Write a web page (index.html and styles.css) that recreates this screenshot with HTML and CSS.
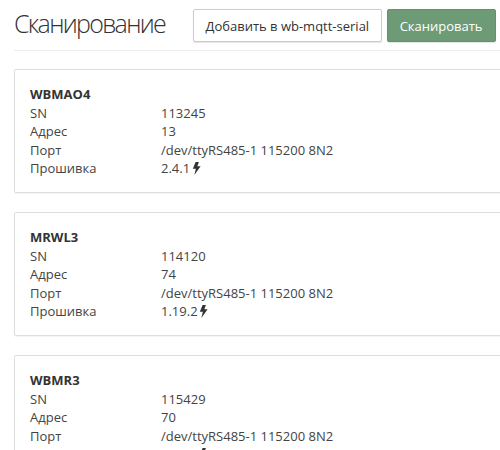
FILE: index.html
```html
<!DOCTYPE html>
<html lang="en">
  <head>
    <meta charset="UTF-8" />
    <title>Сканирование</title>
    <link rel="stylesheet" href="styles.css">
  </head>
  <body>
    <div class="page-header">
      <h1>Сканирование</h1>
      <button class="btn">Добавить в wb-mqtt-serial</button>
      <button class="btn btn-success">Сканировать</button>
    </div>

    <div class="device">
      <div class="device-name">WBMAO4</div>
      <div class="row"><span class="key">SN</span><span>113245</span></div>
      <div class="row"><span class="key">Адрес</span><span>13</span></div>
      <div class="row"><span class="key">Порт</span><span>/dev/ttyRS485-1 115200 8N2</span></div>
      <div class="row">
        <span class="key">Прошивка</span>
        <span>2.4.1 <svg class="bolt" viewBox="0 0 8 12"><path d="M3.2 0h3L4.8 4h3L2 12 3.4 6.2H.6z"/></svg></span>
      </div>
    </div>

    <div class="device">
      <div class="device-name">MRWL3</div>
      <div class="row"><span class="key">SN</span><span>114120</span></div>
      <div class="row"><span class="key">Адрес</span><span>74</span></div>
      <div class="row"><span class="key">Порт</span><span>/dev/ttyRS485-1 115200 8N2</span></div>
      <div class="row">
        <span class="key">Прошивка</span>
        <span>1.19.2 <svg class="bolt" viewBox="0 0 8 12"><path d="M3.2 0h3L4.8 4h3L2 12 3.4 6.2H.6z"/></svg></span>
      </div>
    </div>

    <div class="device">
      <div class="device-name">WBMR3</div>
      <div class="row"><span class="key">SN</span><span>115429</span></div>
      <div class="row"><span class="key">Адрес</span><span>70</span></div>
      <div class="row"><span class="key">Порт</span><span>/dev/ttyRS485-1 115200 8N2</span></div>
      <div class="row">
        <span class="key">Прошивка</span>
        <span>1.17.2 <svg class="bolt" viewBox="0 0 8 12"><path d="M3.2 0h3L4.8 4h3L2 12 3.4 6.2H.6z"/></svg></span>
      </div>
    </div>
  </body>
</html>
```

FILE: styles.css
```css
html,
body {
  height: 450px;
  overflow: hidden;
}
body {
  margin: 0;
  padding: 0 0 0 14px;
  background: white;
  font-family: "Open Sans", sans-serif;
  font-size: 13px;
  line-height: 18.57px;
  color: #444;
}
.page-header {
  display: flex;
  align-items: flex-start;
  width: 520px;
  height: 51px;
  padding-top: 9px;
  box-sizing: border-box;
  border-bottom: 1px solid #eee;
}
h1 {
  width: 179px;
  margin: -1px 0 0;
  font-size: 25px;
  font-weight: 300;
  letter-spacing: -1.7px;
  line-height: 30px;
  color: #333;
}
.btn {
  height: 33px;
  padding: 0 11.5px;
  margin-right: 5px;
  font-family: inherit;
  font-size: 13px;
  color: #333;
  background: white;
  border: 1px solid #ccc;
  border-radius: 2px;
  box-shadow: 0 1px 1px rgba(0, 0, 0, 0.1);
}
.btn-success {
  padding: 0 12px;
  background: #6d9b75;
  border-color: #64906c;
  color: white;
}
.device {
  width: 520px;
  box-sizing: border-box;
  margin-top: 18px;
  margin-bottom: 19px;
  padding: 15px;
  height: 124px;
  border: 1px solid #ddd;
  border-radius: 2px;
  box-shadow: 0 1px 1px rgba(0, 0, 0, 0.05);
}
.device-name {
  font-weight: 700;
  color: #333;
}
.row {
  display: flex;
}
.key {
  width: 131px;
}
.bolt {
  width: 9px;
  height: 13px;
  margin-left: -2px;
  vertical-align: -2px;
  fill: #333;
}
```
